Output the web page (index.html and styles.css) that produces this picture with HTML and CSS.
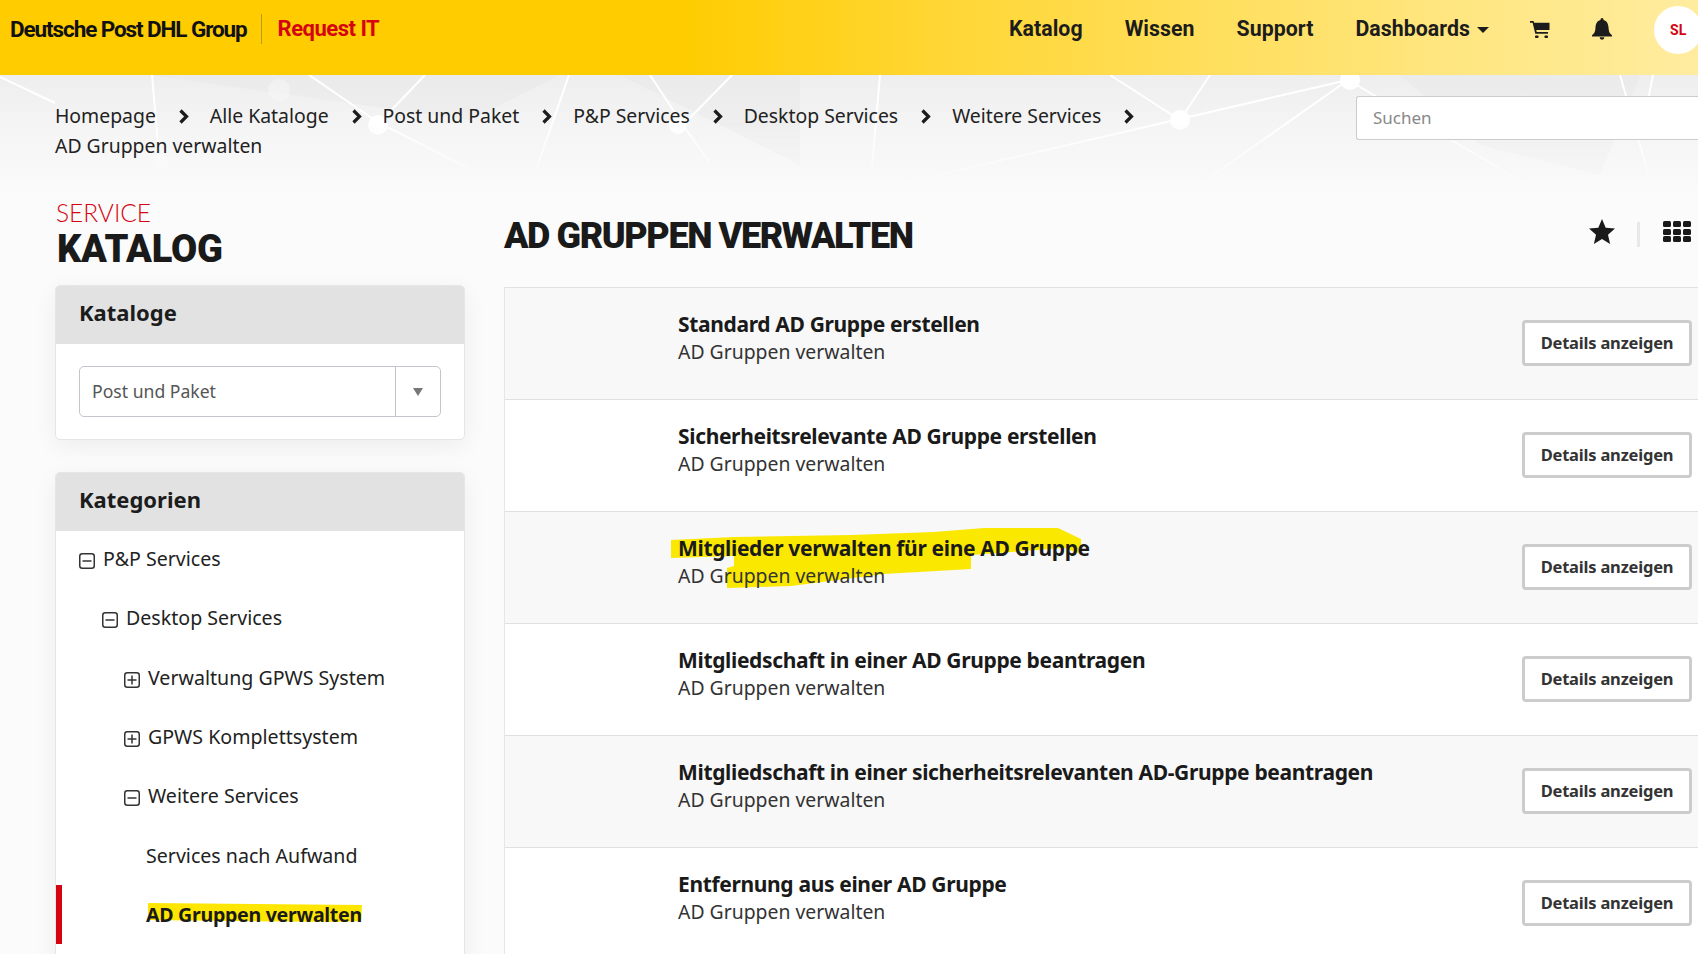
FILE: index.html
```html
<!DOCTYPE html>
<html>
<head>
<meta charset="utf-8">
<title>Request IT - AD Gruppen verwalten</title>
<link rel="stylesheet" href="styles.css">
</head>
<body>

<div class="top">
<div class="logo">Deutsche Post DHL Group</div>
<div class="app_name">Request IT</div>
<div class="nav">
<a class="nav_a">Katalog</a>
<a class="nav_b">Wissen</a>
<a class="nav_c">Support</a>
<a class="nav_d">Dashboards<span class="caret"></span></a>
<svg class="ic_cart" viewBox="0 0 20 17"><path d="M0 0h3.600l.5 1.800H19.500v7.200H6.300l.4 2H18v1.700H5.300L2.600 1.700H0z"/><rect x="5" y="14.400" width="3.500" height="2.600" rx=".8"/><rect x="14.500" y="14.400" width="3.500" height="2.600" rx=".8"/></svg>
<svg class="ic_bell" viewBox="0 0 20 22"><path d="M10 0a1.500 1.500 0 0 1 1.500 1.500v.6C15 3 16.300 6 16.500 9.500c.2 4 1 5.800 3.500 7.800v1.200H0v-1.200c2.500-2 3.300-3.800 3.500-7.800C3.700 6 5 3 8.500 2.100v-.6A1.500 1.500 0 0 1 10 0z"/><path d="M7.600 19.300h4.800a2.400 2.400 0 0 1-4.800 0z"/></svg>
<div class="avatar">SL</div>
</div>
</div>

<div class="hero">
<svg class="hero_bg" viewBox="0 0 1698 125" preserveAspectRatio="none">
<g fill="#e6e6e6" opacity=".35">
<polygon points="150,0 560,0 470,45"/>
<polygon points="620,0 800,0 800,90 700,40"/>
<polygon points="1400,0 1640,0 1600,100 1480,70"/>
</g>
<g stroke="#ffffff" stroke-width="2" fill="none">
<path d="M0 2 55 28M152 0 157 58 160 90M309 0 379 48 466 92M425 0 379 48M569 0 537 92M650 0 683 50 710 88M732 0 683 50"/>
<path d="M880 0 872 92M1110 0 1180 45M1210 0 1180 45M1348 5 904 108M1348 5 1196 112M1348 5 1537 115M1620 0 1650 105M1653 0 1640 65"/>
</g>
<g fill="#ffffff">
<circle cx="378" cy="50" r="10"/>
<circle cx="678" cy="50" r="9"/>
<circle cx="1180" cy="45" r="10"/>
<circle cx="1350" cy="5" r="10"/>
<circle cx="279" cy="15" r="11" opacity=".25"/>
<circle cx="160" cy="88" r="9" opacity=".5"/>
</g>
</svg>
<div class="crumbs">
<a>Homepage</a><svg class="chev" viewBox="0 0 12 15"><path d="M2.500 1.500l6 6-6 6"/></svg>
<a>Alle Kataloge</a><svg class="chev" viewBox="0 0 12 15"><path d="M2.500 1.500l6 6-6 6"/></svg>
<a>Post und Paket</a><svg class="chev" viewBox="0 0 12 15"><path d="M2.500 1.500l6 6-6 6"/></svg>
<a>P&amp;P Services</a><svg class="chev" viewBox="0 0 12 15"><path d="M2.500 1.500l6 6-6 6"/></svg>
<a>Desktop Services</a><svg class="chev" viewBox="0 0 12 15"><path d="M2.500 1.500l6 6-6 6"/></svg>
<a>Weitere Services</a><svg class="chev" viewBox="0 0 12 15"><path d="M2.500 1.500l6 6-6 6"/></svg>
<a class="crumb_last">AD Gruppen verwalten</a>
</div>
<div class="search">Suchen</div>
</div>

<div class="m_body">

<div class="side">
<div class="side_title">
<div class="st_small">SERVICE</div>
<div class="st_big">KATALOG</div>
</div>

<div class="panel panel_cat">
<div class="panel_hdr">Kataloge</div>
<div class="panel_sel">
<div class="sel">
<div class="sel_val">Post und Paket</div>
<div class="sel_btn"><span class="sel_arrow"></span></div>
</div>
</div>
</div>

<div class="panel panel_tree">
<div class="panel_hdr">Kategorien</div>
<ul class="tree">
<li class="lv0"><svg class="tgl" viewBox="0 0 16 16"><rect x=".75" y=".75" width="14.500" height="14.500" rx="2.500"/><path d="M3.500 8h9"/></svg>P&amp;P Services</li>
<li class="lv1"><svg class="tgl" viewBox="0 0 16 16"><rect x=".75" y=".75" width="14.500" height="14.500" rx="2.500"/><path d="M3.500 8h9"/></svg>Desktop Services</li>
<li class="lv2"><svg class="tgl" viewBox="0 0 16 16"><rect x=".75" y=".75" width="14.500" height="14.500" rx="2.500"/><path d="M3.500 8h9M8 3.500v9"/></svg>Verwaltung GPWS System</li>
<li class="lv2"><svg class="tgl" viewBox="0 0 16 16"><rect x=".75" y=".75" width="14.500" height="14.500" rx="2.500"/><path d="M3.500 8h9M8 3.500v9"/></svg>GPWS Komplettsystem</li>
<li class="lv2"><svg class="tgl" viewBox="0 0 16 16"><rect x=".75" y=".75" width="14.500" height="14.500" rx="2.500"/><path d="M3.500 8h9"/></svg>Weitere Services</li>
<li class="lv3">Services nach Aufwand</li>
<li class="lv3 active"><span class="mark_side"><svg viewBox="0 0 216 22" preserveAspectRatio="none"><polygon points="2,2 216,4 215,20 190,21 2,19"/></svg></span><b>AD Gruppen verwalten</b></li>
</ul>
</div>
</div>

<div class="main">
<div class="main_hdr">
<h1>AD GRUPPEN VERWALTEN</h1>
<svg class="ic_star" viewBox="0 0 26 25"><path d="M13 0l3.700 8.700 9.300.8-7 6.200 2.100 9.300L13 20.100 4.900 25 7 15.700 0 9.500l9.300-.8z"/></svg>
<div class="hdr_sep"></div>
<div class="ic_grid"><i></i><i></i><i></i><i></i><i></i><i></i><i></i><i></i><i></i></div>
</div>

<div class="list">
<div class="row">
<div class="row_txt"><div class="row_t">Standard AD Gruppe erstellen</div><div class="row_s">AD Gruppen verwalten</div></div>
<div class="btn">Details anzeigen</div>
</div>
<div class="row">
<div class="row_txt"><div class="row_t">Sicherheitsrelevante AD Gruppe erstellen</div><div class="row_s">AD Gruppen verwalten</div></div>
<div class="btn">Details anzeigen</div>
</div>
<div class="row">
<svg class="mark_row" viewBox="0 0 1194 112"><polygon points="166,28 229,25 346,23 429,20 479,16 553,16 576,27 576,42 559,36 466,43 466,57 379,62 286,74 222,76 222,56 229,54 229,44 166,46"/></svg>
<div class="row_txt"><div class="row_t">Mitglieder verwalten für eine AD Gruppe</div><div class="row_s">AD Gruppen verwalten</div></div>
<div class="btn">Details anzeigen</div>
</div>
<div class="row">
<div class="row_txt"><div class="row_t">Mitgliedschaft in einer AD Gruppe beantragen</div><div class="row_s">AD Gruppen verwalten</div></div>
<div class="btn">Details anzeigen</div>
</div>
<div class="row">
<div class="row_txt"><div class="row_t">Mitgliedschaft in einer sicherheitsrelevanten AD-Gruppe beantragen</div><div class="row_s">AD Gruppen verwalten</div></div>
<div class="btn">Details anzeigen</div>
</div>
<div class="row">
<div class="row_txt"><div class="row_t">Entfernung aus einer AD Gruppe</div><div class="row_s">AD Gruppen verwalten</div></div>
<div class="btn">Details anzeigen</div>
</div>
</div>
</div>

</div>

</body>
</html>
```

FILE: styles.css
```css
html, body {margin:0;height:954px;overflow:hidden;}
body {background:#fbfbfb;color:#1f1f1f;font-family:"Noto Sans","Liberation Sans",sans-serif;font-size:20px;}
a {cursor:pointer;}

/* top bar */
.top {height:75px;display:flex;align-items:center;padding:0 0 18px 10px;box-sizing:border-box;background:linear-gradient(90deg,#ffcc00 0%,#ffcc00 40%,#ffd633 55%,#ffe67f 85%,#ffec9f 100%);}
.logo {font-family:Roboto,sans-serif;font-weight:700;font-size:22.500px;letter-spacing:-1.100px;color:#111;padding-right:14px;border-right:1px solid #b89a20;line-height:30px;white-space:nowrap;}
.app_name {font-family:Roboto,sans-serif;font-weight:700;font-size:22px;letter-spacing:-.5px;color:#d40511;margin-left:16px;}
.nav {margin-left:auto;display:flex;align-items:center;font-family:Roboto,sans-serif;font-weight:700;font-size:21.300px;letter-spacing:.05px;color:#1c1c1c;margin-right:-4px;}
.nav a {white-space:nowrap;}
.nav_a {margin-right:42px;}
.nav_b {margin-right:42px;}
.nav_c {margin-right:42px;}
.nav_d {margin-right:41px;}
.caret {display:inline-block;margin-left:7px;vertical-align:middle;border:6px solid transparent;border-top-color:#1c1c1c;border-bottom:none;}
.ic_cart {width:20px;height:17px;fill:#1c1c1c;margin:2px 42px 0 0;}
.ic_bell {width:20px;height:22px;fill:#1c1c1c;margin-right:42px;}
.avatar {width:48px;height:48px;margin-top:2px;border-radius:50%;background:#fff;color:#d40511;font-size:14px;font-weight:700;line-height:48px;text-indent:16px;}

/* breadcrumbs + search */
.hero {position:relative;height:125px;display:flex;align-items:flex-start;padding:26px 0 0 55px;box-sizing:border-box;background:linear-gradient(180deg,#eeeeee 0%,#f5f5f5 45%,#fbfbfb 100%);}
.hero_bg {position:absolute;left:0;top:0;width:1698px;height:125px;-webkit-mask-image:linear-gradient(180deg,#000 35%,transparent 100%);mask-image:linear-gradient(180deg,#000 35%,transparent 100%);}
.crumbs {position:relative;width:1160px;display:flex;flex-wrap:wrap;align-items:center;line-height:30px;font-size:19.400px;color:#222;}
.chev {width:12px;height:15px;margin:0 20px 0 22px;fill:none;stroke:#1c1c1c;stroke-width:3.200;}
.crumb_last {width:100%;}
.search {position:relative;margin:-5px 0 0 auto;width:342px;height:44px;box-sizing:border-box;padding-left:16px;background:#fff;border:1px solid #ccc;border-right:none;border-radius:3px 0 0 3px;line-height:42px;font-size:17px;color:#888;}

/* page columns */
.m_body {display:flex;padding-left:55px;}
.side {width:410px;flex:none;}
.main {flex:1;margin-left:39px;}

.side_title {height:85px;margin-left:1px;box-sizing:border-box;}
.st_small {font-size:24.500px;line-height:26px;color:#d40511;font-weight:300;font-family:Lato,sans-serif;}
.st_big {font-family:Roboto,sans-serif;font-size:38px;line-height:41px;font-weight:900;color:#1a1a1a;letter-spacing:-.2px;margin:3px 0 0 1px;}

.panel {background:#fff;border:1px solid #e6e6e6;border-radius:5px;box-shadow:0 6px 24px rgba(0,0,0,.06);overflow:hidden;}
.panel_hdr {height:58px;line-height:52px;padding-left:23px;background:#e2e2e2;font-size:22px;font-weight:700;color:#1c1c1c;}
.panel_sel {padding:22px 23px 22px 23px;}
.panel_cat {height:155px;box-sizing:border-box;margin-bottom:32px;}
.sel {height:51px;box-sizing:border-box;display:flex;border:1px solid #c4c4cc;border-radius:5px;}
.sel_val {flex:1;padding-left:12px;line-height:49px;font-size:17.600px;color:#555;}
.sel_btn {width:44px;border-left:1px solid #c4c4cc;display:flex;align-items:center;justify-content:center;}
.sel_arrow {border:5px solid transparent;border-top:8px solid #777;border-bottom:none;}

.panel_tree {border-bottom:none;border-radius:5px 5px 0 0;height:500px;}
.tree {list-style:none;margin:-2px 0 0 0;padding:0;}
.tree li {height:59.300px;display:flex;align-items:center;font-size:19.600px;color:#222;white-space:nowrap;}
.tree b {position:relative;font-weight:700;color:#1a1a1a;letter-spacing:-.3px;}
.lv0 {padding-left:23px;}
.lv1 {padding-left:46px;}
.lv2 {padding-left:68px;}
.lv3 {padding-left:90px;}
.tgl {width:16px;height:16px;margin:5px 8px 0 0;fill:none;stroke:#333;stroke-width:1.500;flex:none;}
.tree li.active {box-shadow:inset 6px 0 0 #d40511;position:relative;}
.mark_side {position:absolute;left:90px;top:16px;width:216px;height:22px;}
.mark_side svg {display:block;width:100%;height:100%;fill:#ffe600;}

/* service list */
.main_hdr {height:87px;display:flex;align-items:flex-start;padding-right:7px;}
.main_hdr h1 {margin:0 auto 0 0;font-family:Roboto,sans-serif;font-size:36px;line-height:42px;font-weight:900;color:#1a1a1a;letter-spacing:-1.400px;padding-top:15px;}
.ic_star {width:26px;height:25px;fill:#1a1a1a;margin-top:19px;}
.hdr_sep {width:3px;height:25px;background:#e8e8e8;margin:22px 23px 0 22px;}
.ic_grid {display:grid;grid-template-columns:repeat(3,8px);grid-auto-rows:6px;gap:1.500px 2px;width:28px;margin-top:21px;}
.ic_grid i {background:#1a1a1a;border-radius:1.500px;}

.list {border-top:1px solid #e2e2e2;border-left:1px solid #e6e6e6;}
.row {position:relative;height:112px;box-sizing:border-box;display:flex;align-items:center;padding:0 6px 0 173px;background:#f8f8f8;border-bottom:1px solid #e0e0e0;}
.row:nth-child(even) {background:#fff;}
.mark_row {position:absolute;left:0;top:0;width:1194px;height:112px;fill:#fae800;}
.row_txt {position:relative;flex:1;padding-bottom:12px;}
.row_t {font-size:21px;line-height:28px;font-weight:700;letter-spacing:-.35px;color:#1a1a1a;}
.row_s {font-size:19.400px;line-height:28px;color:#333;}
.btn {width:170px;height:46px;margin-top:-1px;box-sizing:border-box;background:#fff;border:3px solid #ccc;border-radius:4px;text-align:center;line-height:40px;font-size:16.500px;letter-spacing:-.2px;font-weight:700;color:#333;}
```
